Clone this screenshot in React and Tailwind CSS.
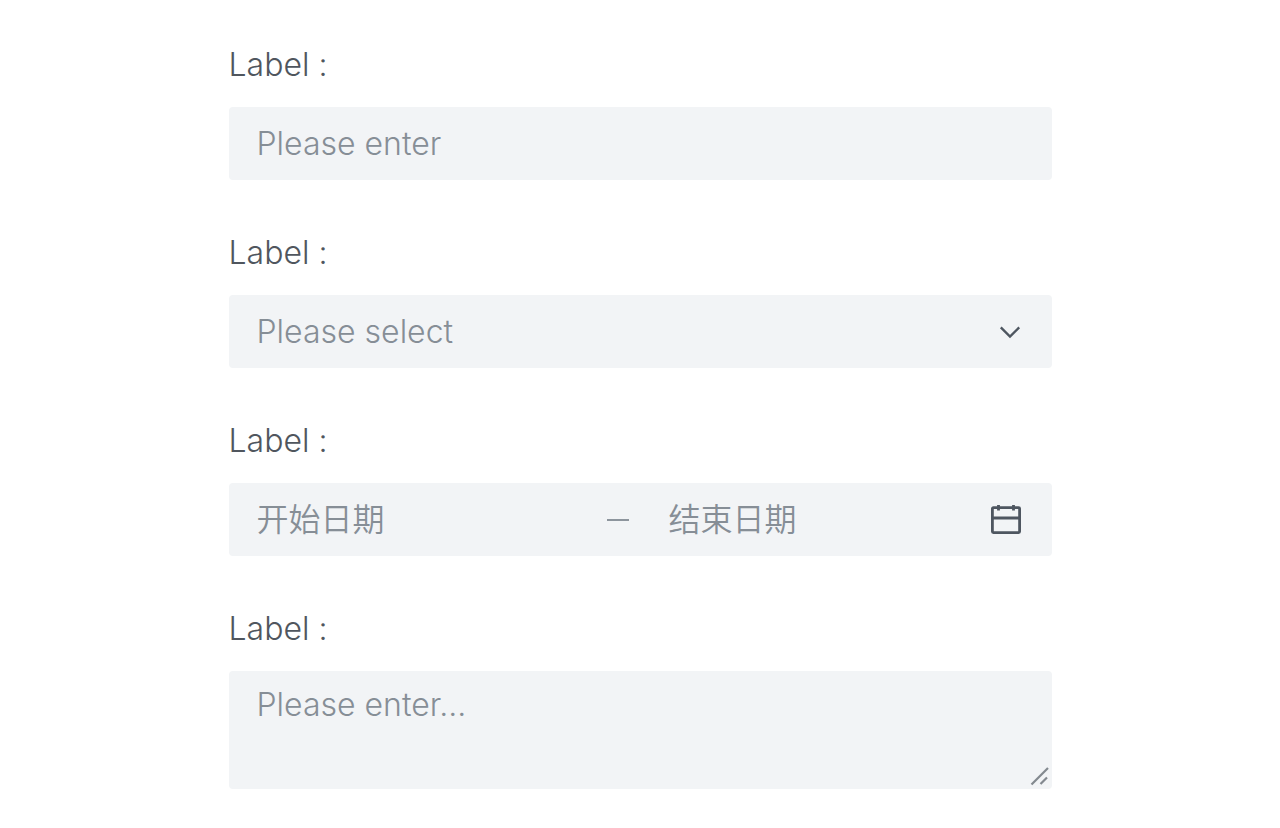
import { useId } from "react";

const fieldBox = "w-full rounded bg-[#f2f4f6]";
const fieldText =
  "text-[32px] leading-[48px] text-[#868e96] placeholder:text-[#868e96] placeholder:opacity-100 outline-none";

function Field({ id, children }) {
  return (
    <div className="flex flex-col gap-[18px]">
      <label htmlFor={id} className="text-[32px] leading-[48px] text-[#50565e]">
        Label :
      </label>
      {children}
    </div>
  );
}

function ChevronIcon() {
  return (
    <svg width="22" height="14" viewBox="0 0 22 14" fill="none" stroke="#4e5660" strokeWidth="2.4" className="pointer-events-none shrink-0" aria-hidden="true">
      <path d="M1.8 2.4 11 11.6 20.2 2.4" />
    </svg>
  );
}

function CalendarIcon() {
  return (
    <svg width="30" height="30" viewBox="0 0 30 30" fill="none" stroke="#4e5660" strokeWidth="2.8" className="shrink-0" aria-hidden="true">
      <rect x="1.4" y="2.6" width="27.2" height="25" rx="1" />
      <path d="M1.4 13H28.6M7.5 -0.4V5.4M22.5 -0.4V5.4" />
    </svg>
  );
}

function ResizeIcon() {
  return (
    <svg width="20" height="20" viewBox="0 0 20 20" fill="none" stroke="#83898f" strokeWidth="2.2" className="pointer-events-none absolute right-0.5 bottom-0.5" aria-hidden="true">
      <path d="M1.5 17.5 18 1M10.5 17 17 10.5" />
    </svg>
  );
}

export default function App() {
  const id = useId();
  return (
    <main className="min-h-screen bg-white pt-[41px] pb-10 font-['Inter','Noto_Sans_CJK_SC',sans-serif] font-[350]">
      <form className="mx-auto flex w-full max-w-[823px] flex-col gap-[49px]">
        <Field id={`${id}-text`}>
          <input id={`${id}-text`} type="text" placeholder="Please enter" className={`${fieldBox} ${fieldText} h-[73px] px-7`} />
        </Field>

        <Field id={`${id}-select`}>
          <div className="grid items-center">
            <select
              id={`${id}-select`}
              defaultValue=""
              className={`${fieldBox} ${fieldText} col-start-1 row-start-1 h-[73px] appearance-none px-7`}
            >
              <option value="" disabled>
                Please select
              </option>
            </select>
            <div className="pointer-events-none col-start-1 row-start-1 flex justify-end pr-[31px]">
              <ChevronIcon />
            </div>
          </div>
        </Field>

        <Field id={`${id}-start`}>
          <div className={`${fieldBox} flex h-[73px] items-center pr-[31px] pl-7`}>
            <input id={`${id}-start`} type="text" placeholder="开始日期" className={`${fieldText} min-w-0 flex-1 bg-transparent`} />
            <span className="mr-10 ml-7 h-0.5 w-[22px] bg-[#8d959d]" aria-hidden="true" />
            <input type="text" aria-label="结束日期" placeholder="结束日期" className={`${fieldText} min-w-0 flex-1 bg-transparent`} />
            <button type="button" aria-label="Calendar">
              <CalendarIcon />
            </button>
          </div>
        </Field>

        <Field id={`${id}-area`}>
          <div className="relative flex">
            <textarea
              id={`${id}-area`}
              placeholder="Please enter..."
              className={`${fieldBox} ${fieldText} h-[118px] resize-none px-7 py-2.5`}
            />
            <ResizeIcon />
          </div>
        </Field>
      </form>
    </main>
  );
}
